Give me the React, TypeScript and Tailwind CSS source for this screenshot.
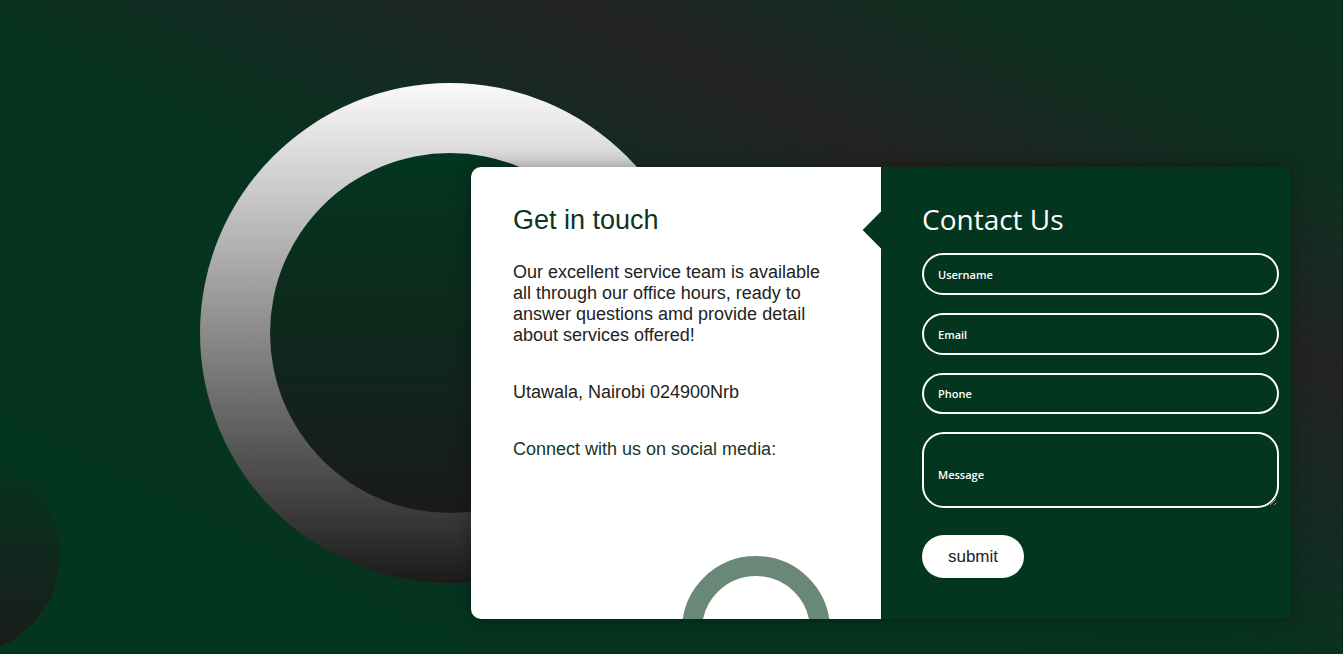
export default function App() {
  return (
    <div className="relative w-full h-[654px] overflow-hidden bg-[linear-gradient(to_top_right,#04361f_0%,#063320_47%,#232323_71%,#0e2f20_86%,#0b3220_100%)]">
      {/* decorative circles */}
      <div className="absolute left-[-140px] top-[455px] w-[200px] h-[200px] rounded-full bg-[linear-gradient(to_bottom,#05351f,#1b1b1b)]" />
      <div className="absolute left-[200px] top-[83px] w-[500px] h-[500px] rounded-full bg-[linear-gradient(to_bottom,#fafafa,#1b1b1b)] flex items-center justify-center">
        <div className="w-[360px] h-[360px] rounded-full bg-[linear-gradient(to_bottom,#03361f,#1a1a1a)]" />
      </div>

      <div className="relative pl-[471px] pt-[167px]">
        <div className="flex w-[820px] h-[452px] rounded-[10px] overflow-hidden shadow-[0_0_18px_rgba(0,0,0,0.35)]">
          {/* Left: info */}
          <div className="relative w-[410px] bg-white px-[42px] pt-[38px] font-['Liberation_Sans',Arial,sans-serif]">
            <h2 className="text-[27px] leading-[31px] text-[#0c3421]">Get in touch</h2>
            <p className="mt-[26px] text-[18px] leading-[21px] text-[#222]">
              Our excellent service team is available all through our office hours, ready to answer questions amd provide detail about services offered!
            </p>
            <p className="mt-[36px] text-[18px] leading-[21px] text-[#222]">Utawala, Nairobi 024900Nrb</p>
            <p className="mt-[36px] text-[18px] leading-[21px] text-[#173826]">Connect with us on social media:</p>
            <div className="absolute left-[211px] top-[389px] w-[148px] h-[148px] rounded-full border-[20px] border-[#698878]" />
          </div>

          {/* Right: form */}
          <div className="relative w-[410px] bg-[#03351f] pl-[41px] pt-[36px]">
            <div className="absolute left-[-13px] top-[50px] w-[26px] h-[26px] rotate-45 bg-[#03351f]" />
            <h2 className="relative text-[28px] leading-[32px] text-white font-['Open_Sans',sans-serif]">Contact Us</h2>
            <form className="mt-[18px] flex flex-col gap-[18px] w-[357px] font-['Open_Sans',sans-serif]">
              <input
                type="text"
                placeholder="Username"
                className="h-[42px] rounded-full border-2 border-white bg-transparent px-[14px] text-[11px] font-semibold text-white placeholder:text-white outline-none"
              />
              <input
                type="email"
                placeholder="Email"
                className="h-[42px] rounded-full border-2 border-white bg-transparent px-[14px] text-[11px] font-semibold text-white placeholder:text-white outline-none"
              />
              <input
                type="tel"
                placeholder="Phone"
                className="h-[41px] rounded-full border-2 border-white bg-transparent px-[14px] text-[11px] font-semibold text-white placeholder:text-white outline-none"
              />
              <textarea
                placeholder="Message"
                className="h-[76px] rounded-[22px] border-2 border-white bg-transparent px-[14px] pt-[33px] text-[11px] leading-[15px] font-semibold text-white placeholder:text-white outline-none"
              />
              <button
                type="button"
                className="mt-[9px] w-[102px] h-[43px] rounded-full bg-white text-[17px] text-[#222] font-['Liberation_Sans',Arial,sans-serif]"
              >
                submit
              </button>
            </form>
          </div>
        </div>
      </div>
    </div>
  );
}
